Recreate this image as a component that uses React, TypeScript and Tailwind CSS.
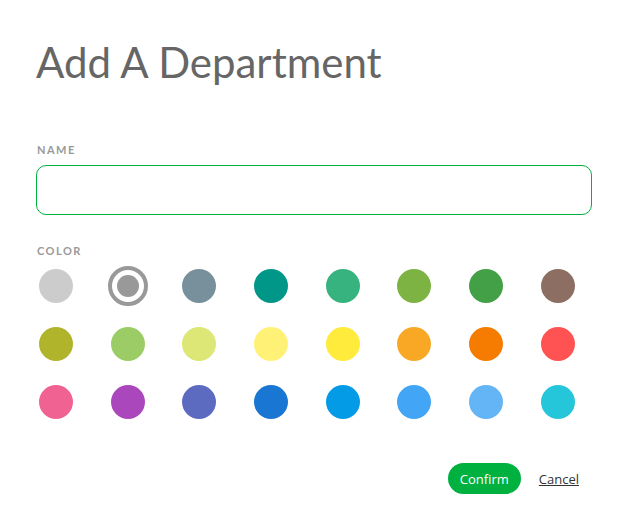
const colors = [
  "#cccccc", "#999999", "#78909c", "#009688", "#36b37e", "#7cb342", "#43a047", "#8d6e63",
  "#afb42b", "#9ccc65", "#dce775", "#fff176", "#ffeb3b", "#f9a825", "#f57c00", "#ff5252",
  "#f06292", "#ab47bc", "#5c6bc0", "#1976d2", "#039be5", "#42a5f5", "#64b5f6", "#26c6da",
];

function Swatch({ color, selected }: { color: string; selected: boolean }) {
  if (selected) {
    return (
      <div className="w-10 h-10 rounded-full border-[4px] flex items-center justify-center" style={{ borderColor: color }}>
        <div className="w-[22px] h-[22px] rounded-full" style={{ backgroundColor: color }} />
      </div>
    );
  }
  return (
    <div className="w-10 h-10 flex items-center justify-center">
      <div className="w-[34px] h-[34px] rounded-full" style={{ backgroundColor: color }} />
    </div>
  );
}

export default function App() {
  return (
    <div className="w-[627px] h-[528px] bg-white px-[36px] pt-[36px] font-['Lato',sans-serif]">
      <h1 className="text-[42px] leading-[52px] text-[#666666] font-normal">Add A Department</h1>

      <label className="block mt-[54px] ml-[1px] text-[11px] leading-4 font-bold tracking-[1.5px] text-[#999999]">NAME</label>
      <input
        type="text"
        className="mt-[7px] block w-[556px] h-[50px] rounded-[10px] border border-[#00b140] outline-none px-3"
      />

      <label className="block mt-[28px] ml-[1px] text-[11px] leading-4 font-bold tracking-[1.5px] text-[#999999]">COLOR</label>
      <div className="mt-[7px] grid grid-cols-[repeat(8,40px)] gap-x-[31.7px] gap-y-[18px]">
        {colors.map((c, i) => (
          <Swatch key={i} color={c} selected={i === 1} />
        ))}
      </div>

      <div className="mt-[41px] flex items-center justify-end gap-[18px] pr-[12px] font-['Open_Sans',sans-serif]">
        <button className="h-[31px] px-3 pt-[2px] rounded-full bg-[#00b140] text-white text-[13px]">Confirm</button>
        <button className="mt-[3px] text-[13px] text-[#333333] underline">Cancel</button>
      </div>
    </div>
  );
}
